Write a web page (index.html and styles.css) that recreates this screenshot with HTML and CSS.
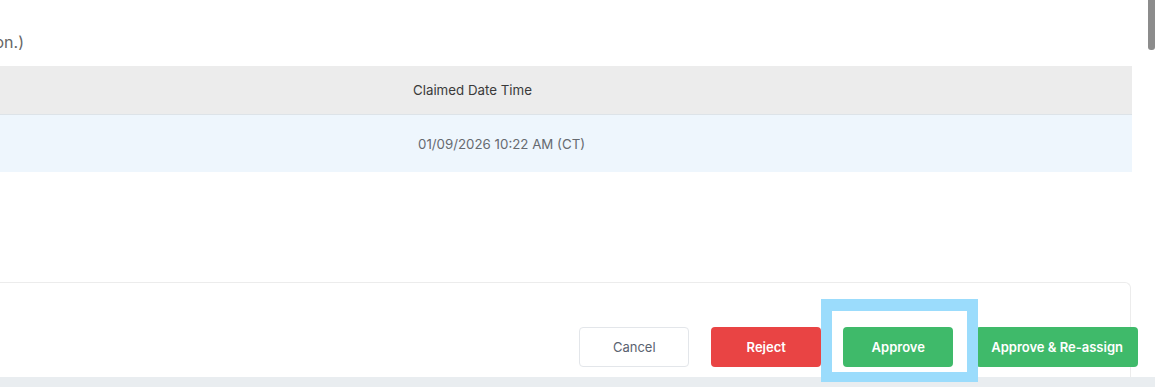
FILE: index.html
```html
<!DOCTYPE html>
<html>
<head>
  <title>Claim Review</title>
  <meta name="viewport" content="width=device-width, initial-scale=1">
  <link rel="stylesheet" href="styles.css">
</head>
<body>

  <div id="app">

    <div class="note_row">
      <p class="note">(Times are shown in the time zone of the claiming location.)</p>
    </div>

    <table class="claims">
      <thead>
        <tr>
          <th class="spacer"></th>
          <th>Claimed Date Time</th>
        </tr>
      </thead>
      <tbody>
        <tr>
          <td class="spacer"></td>
          <td>01/09/2026 10:22 AM (CT)</td>
        </tr>
      </tbody>
    </table>

    <div class="card">
      <div class="actions">
        <button class="btn cancel">Cancel</button>
        <button class="btn reject">Reject</button>
        <span class="focus_wrap">
          <button class="btn approve">Approve</button>
          <span class="focus_ring"></span>
        </span>
        <button class="btn approve">Approve &amp; Re-assign</button>
      </div>
    </div>

    <div class="band"></div>
  </div>

  <div class="scroll_thumb"></div>

</body>
</html>
```

FILE: styles.css
```css
body {
  margin: 0;
  background-color: #ffffff;
  font-family: Inter, "Noto Sans", sans-serif;
  color: #333333;
  overflow: hidden;
}

#app {
  width: 1155px;
}

.note_row {
  display: flex;
  justify-content: flex-end;
  width: 24px;
  height: 66px;
}

.note {
  margin: 33px 0 0 0;
  white-space: nowrap;
  font-size: 16px;
  line-height: 18px;
  color: #666666;
}

.claims {
  width: 1132px;
  border-collapse: collapse;
}

.claims th,
.claims td {
  text-align: left;
  white-space: nowrap;
  font-size: 13.3px;
}

.claims th {
  height: 47px;
  padding: 0 0 1px 13px;
  font-weight: 400;
  color: #3a3a3a;
  background-color: #ececec;
  border-bottom: 1px solid #dde3e8;
}

.claims td {
  height: 57px;
  padding: 0 0 0 18px;
  color: #666a70;
  background-color: #eef6fd;
}

.claims .spacer {
  width: 400px;
  padding: 0;
}

.card {
  margin-top: 110px;
  width: 1131px;
  height: 95px;
  border: 1px solid #ececec;
  border-left: none;
  border-bottom: none;
  border-radius: 0 6px 0 0;
  box-sizing: border-box;
  padding-top: 44px;
}

.actions {
  display: flex;
  justify-content: flex-end;
  gap: 22px;
  margin-right: -8px;
}

.btn {
  height: 40px;
  min-width: 110px;
  padding: 0 14px;
  border-radius: 4px;
  border: 1px solid transparent;
  font-family: Inter, "Noto Sans", sans-serif;
  font-size: 13px;
  font-weight: 600;
  color: #ffffff;
}

.cancel {
  background-color: #ffffff;
  border-color: #e3e6ea;
  color: #5a6270;
  font-weight: 400;
}

.reject {
  background-color: #e94444;
}

.approve {
  background-color: #3fba6a;
}

.focus_wrap {
  position: relative;
  display: inline-flex;
  margin-right: 1px;
}

.focus_ring {
  position: absolute;
  top: -28px;
  left: -22px;
  right: -25px;
  bottom: -15px;
  border: 11px solid #9bdcfc;
  border-top-width: 12px;
  border-bottom-width: 10px;
}

.band {
  height: 10px;
  background-color: #e9edf0;
}

.scroll_thumb {
  position: fixed;
  top: 0;
  right: 0;
  width: 7px;
  height: 50px;
  background-color: #8c8c8c;
  border-radius: 0 0 3px 3px;
}
```
